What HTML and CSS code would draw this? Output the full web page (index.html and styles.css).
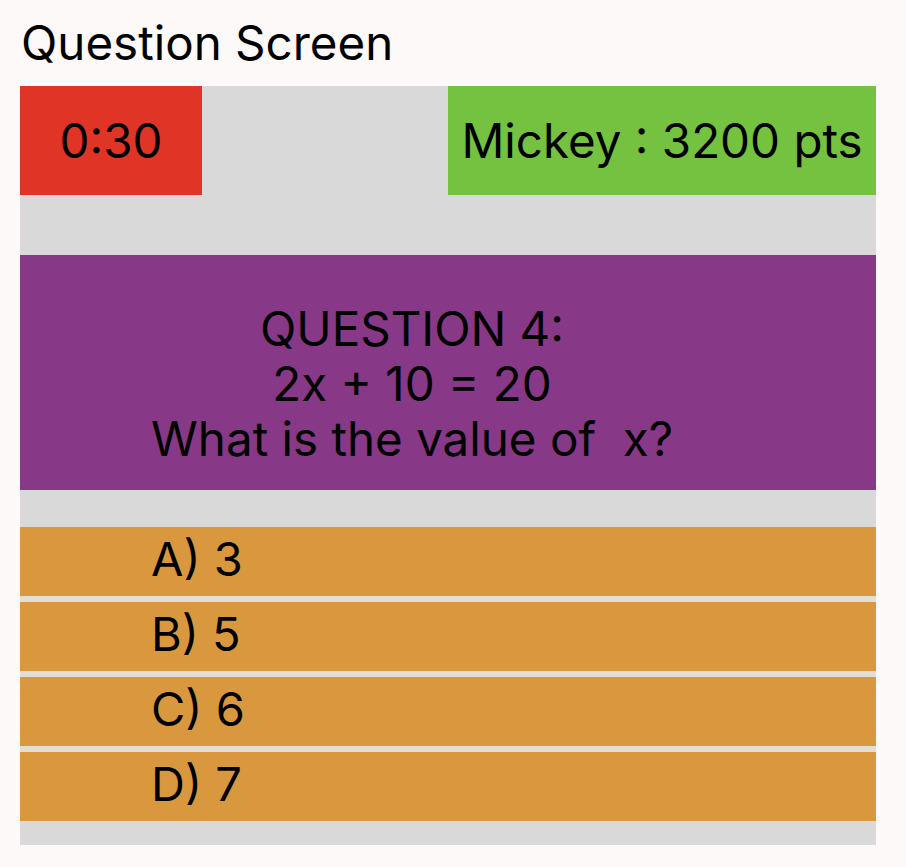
FILE: index.html
```html
<!DOCTYPE html>
<html>
<head>
<meta charset="utf-8">
<link rel="stylesheet" href="styles.css">
</head>
<body>
<h1 class="title">Question Screen</h1>
<main class="board">
  <div class="top-row">
    <div class="timer">0:30</div>
    <div class="score">Mickey : 3200 pts</div>
  </div>
  <section class="question">
    <p class="q-line">QUESTION 4:</p>
    <p class="q-line">2x + 10 = 20</p>
    <p class="q-line">What is the value of&nbsp; x?</p>
  </section>
  <ul class="answers">
    <li class="answer">A) 3</li>
    <li class="answer">B) 5</li>
    <li class="answer">C) 6</li>
    <li class="answer">D) 7</li>
  </ul>
</main>
</body>
</html>
```
FILE: styles.css
```css
html, body {
  margin: 0;
  padding: 0;
  background: #fcf9f8;
}
body {
  font-family: Inter, "Liberation Sans", sans-serif;
  color: #000;
  width: 906px;
  height: 867px;
  overflow: hidden;
}
.title {
  margin: 0;
  font-size: 47.5px;
  font-weight: 400;
  line-height: 56px;
  height: 86px;
  box-sizing: border-box;
  padding: 15px 0 0 21px;
}
.board {
  margin: 0 30px 0 20px;
  background: #d9d9d9;
  padding-bottom: 24px;
}
.top-row {
  display: flex;
  justify-content: space-between;
  height: 109px;
  margin-bottom: 60px;
}
.timer, .score {
  display: flex;
  align-items: center;
  justify-content: center;
  font-size: 47.5px;
}
.timer {
  width: 182px;
  background: #e03426;
}
.score {
  width: 428px;
  background: #74c23f;
}
.question {
  height: 235px;
  box-sizing: border-box;
  background: #873886;
  padding: 46px 72px 0 0;
  text-align: center;
  margin-bottom: 37px;
}
.q-line {
  margin: 0;
  font-size: 47.5px;
  line-height: 55px;
}
.answers {
  list-style: none;
  margin: 0;
  padding: 0;
  display: flex;
  flex-direction: column;
  gap: 6px;
  background: #e4ddd6;
}
.answer {
  height: 69px;
  display: flex;
  align-items: center;
  padding-left: 131px;
  padding-bottom: 6px;
  box-sizing: border-box;
  background: #da983e;
  font-size: 47px;
}
```
